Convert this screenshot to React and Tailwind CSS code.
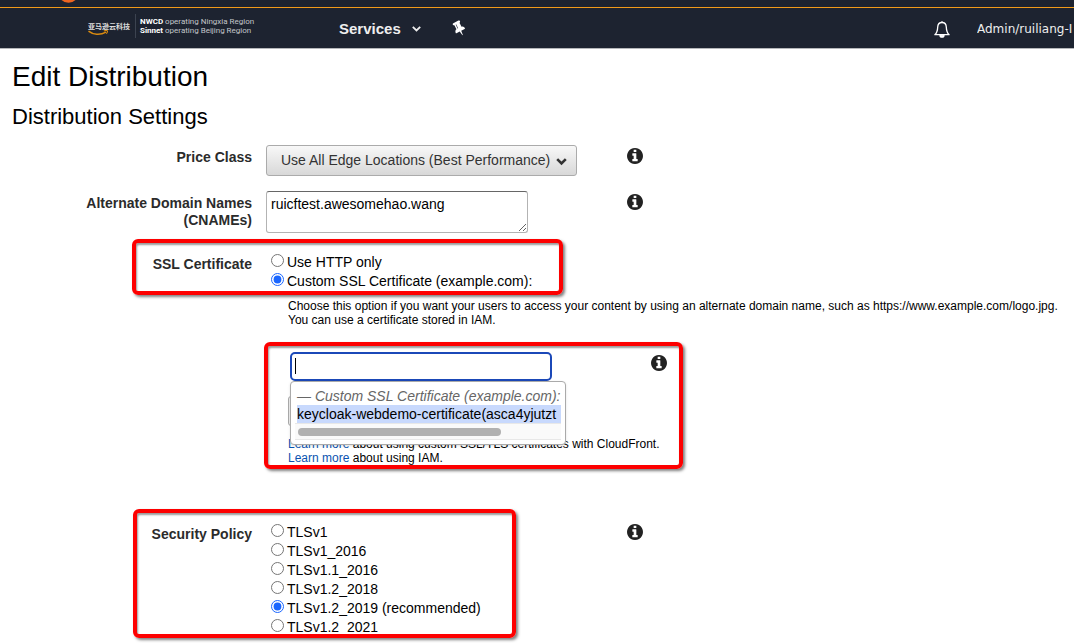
function InfoButton({ label, className = "" }) {
  return (
    <button type="button" aria-label={`Help: ${label}`} className={`block cursor-pointer text-[#222] ${className}`}>
      <svg width="16" height="16" viewBox="128 128 1536 1536" fill="currentColor" aria-hidden="true">
        <path d="M1152 1376v-160q0-14-9-23t-23-9h-96v-512q0-14-9-23t-23-9h-320q-14 0-23 9t-9 23v160q0 14 9 23t23 9h96v320h-96q-14 0-23 9t-9 23v160q0 14 9 23t23 9h448q14 0 23-9t9-23zm-128-896v-160q0-14-9-23t-23-9h-192q-14 0-23 9t-9 23v160q0 14 9 23t23 9h192q14 0 23-9t9-23zm640 416q0 209-103 385.500t-279.500 279.500-385.500 103-385.500-103-279.500-279.500-103-385.500 103-385.500 279.500-279.500 385.500-103 385.500 103 279.500 279.500 103 385.500z" />
      </svg>
    </button>
  );
}

function Highlight({ className }) {
  return (
    <div
      aria-hidden="true"
      className={`pointer-events-none absolute z-30 rounded-md border-4 border-[#fd0000] shadow-[2px_2px_3px_rgba(0,0,0,0.5),inset_1px_2px_2px_rgba(0,0,0,0.4)] ${className}`}
    />
  );
}

function RadioOption({ name, label, defaultChecked }) {
  return (
    <label className="flex h-[19px] w-fit items-center gap-[3px] pl-[5px]">
      <input type="radio" name={name} defaultChecked={defaultChecked} className="-mt-1 size-[13px] accent-[#1a66ff]" />
      <span className="whitespace-nowrap leading-[19px]">{label}</span>
    </label>
  );
}

function Header() {
  return (
    <header className="overflow-hidden border-b border-[#b5b7ba] bg-[#1d2330] text-[#eee]">
      <div className="h-2 overflow-hidden border-b border-[#f19a1a] pl-[59px]">
        <svg width="19" height="3" viewBox="0 0 19 3" aria-hidden="true">
          <circle cx="9.5" cy="-7.5" r="10.3" fill="#ee6420" />
        </svg>
      </div>
      <div className="flex h-10 items-center">
        <a href="#home" className="ml-[88px] flex w-[251px] shrink-0 items-center">
          <span className="flex w-[47px] flex-col pt-0.5">
            <span className="whitespace-nowrap font-['Noto_Sans_CJK_SC',sans-serif] text-[7px] font-bold leading-[8px] text-[#ddd]">
              亚马逊云科技
            </span>
            <svg width="21" height="6" viewBox="0 0 21 6" aria-hidden="true" fill="none" stroke="#d88a10">
              <path d="M.5 1.2C5 4.8 12 5.6 18 2.2" strokeWidth="1.5" />
              <path d="M15.8 1C17 .5 18.8.4 19.3.8 19.7 1.2 19.1 2.8 18.4 3.8" strokeWidth="1.1" />
            </svg>
          </span>
          <span className="-mt-1 border-l border-[#3c4350] py-[3px] pl-1 font-[Roboto,'Noto_Sans',sans-serif] text-[8px] leading-[9px] text-[#c2c5ca]">
            <span className="block whitespace-nowrap">
              <b className="text-white">NWCD</b> operating Ningxia Region
            </span>
            <span className="block whitespace-nowrap">
              <b className="text-white">Sinnet</b> operating Beijing Region
            </span>
          </span>
        </a>
        <button type="button" className="flex shrink-0 items-center gap-[11px] pt-0.5 text-[15px] font-bold">
          Services
          <svg width="9" height="6" viewBox="0 0 9 6" aria-hidden="true" fill="none" stroke="#eee" strokeWidth="1.8">
            <path d="M.8.8 4.5 4.4 8.2.8" />
          </svg>
        </button>
        <button type="button" aria-label="Pin shortcut" className="ml-[30px] shrink-0 text-white">
          <svg width="16" height="16" viewBox="0 0 1792 1792" fill="currentColor" aria-hidden="true">
            <g transform="rotate(-27 896 896)">
              <path d="M800 864v-448q0-14-9-23t-23-9-23 9-9 23v448q0 14 9 23t23 9 23-9 9-23zm672 352q0 26-19 45t-45 19h-429l-51 483q-2 12-10.500 20.500t-20.500 8.500h-1q-27 0-32-27l-76-485h-404q-26 0-45-19t-19-45q0-123 78.500-221.500t177.500-98.500v-512q-52 0-90-38t-38-90 38-90 90-38h640q52 0 90 38t38 90-38 90-90 38v512q99 0 177.500 98.500t78.500 221.500z" />
            </g>
          </svg>
        </button>
        <div className="ml-auto flex items-center gap-[27px]">
          <button type="button" aria-label="Notifications" className="pt-0.5">
            <svg width="16" height="17" viewBox="0 0 16 17" fill="none" stroke="#fff" strokeWidth="1.3" strokeLinejoin="round" aria-hidden="true">
              <path d="M8 1.500C5.200 1.500 3.800 3.300 3.700 6 3.600 9.800 3 11.800.9 13.700h14.200C13 11.800 12.400 9.800 12.300 6 12.200 3.300 10.800 1.500 8 1.500Z" />
              <path d="M8 1.500V.2" />
              <path d="M6 14.200h4c0 1.200-.9 2-2 2s-2-.8-2-2Z" fill="#fff" />
            </svg>
          </button>
          <button type="button" className="w-[97px] overflow-hidden whitespace-nowrap pt-0.5 text-left font-['DejaVu_Sans',sans-serif] text-xs">
            Admin/ruiliang-I
          </button>
        </div>
      </div>
    </header>
  );
}

function Row({ label, htmlFor, className = "", children }) {
  const text = "w-[252px] shrink-0 pt-1 text-right font-bold leading-[17px] text-[#2b2b2b]";
  return (
    <div className={`relative flex items-start ${className}`}>
      {htmlFor ? (
        <label htmlFor={htmlFor} className={text}>{label}</label>
      ) : (
        <div className={text}>{label}</div>
      )}
      <div className="ml-3.5 flex items-start">{children}</div>
    </div>
  );
}

const policies = ["TLSv1", "TLSv1_2016", "TLSv1.1_2016", "TLSv1.2_2018", "TLSv1.2_2019 (recommended)", "TLSv1.2_2021"];

export default function App() {
  return (
    <div className="min-h-screen overflow-x-hidden bg-white font-['Liberation_Sans',Arial,sans-serif] text-sm text-black">
      <Header />
      <main>
        <h1 className="px-3 pt-3 text-[28px] leading-8">Edit Distribution</h1>
        <h2 className="px-3 pt-3 text-[22px] leading-6">Distribution Settings</h2>
        <form>
          <Row label="Price Class" htmlFor="price" className="mt-4">
            <div className="w-[361px]">
              <div className="relative w-[311px]">
                <select
                  id="price"
                  className="h-[31px] w-full appearance-none rounded-[3px] border border-[#ababab] bg-linear-to-b from-[#f8f8f8] to-[#d8d8d8] pb-0.5 pl-3.5 text-[#333]"
                >
                  <option>Use All Edge Locations (Best Performance)</option>
                </select>
                <svg className="pointer-events-none absolute right-2.5 top-[13px]" width="11" height="8" viewBox="0 0 11 8" aria-hidden="true" fill="none" stroke="#333" strokeWidth="2.6">
                  <path d="M1.200 1.200 5.500 5.500 9.800 1.200" />
                </svg>
              </div>
            </div>
            <InfoButton label="Price Class" className="mt-[3px]" />
          </Row>

          <Row
            label={<>Alternate Domain Names<br />(CNAMEs)</>}
            htmlFor="cnames"
            className="mt-[15px]"
          >
            <div className="w-[361px]">
              <textarea
                id="cnames"
                defaultValue="ruicftest.awesomehao.wang"
                className="block h-[42px] w-[262px] rounded-[3px] border border-[#b3b3b3] border-t-[#666] px-1 pt-1 leading-[17px]"
              />
            </div>
            <InfoButton label="Alternate Domain Names" className="mt-[3px]" />
          </Row>

          <Row label="SSL Certificate" className="mt-[19px]">
            <Highlight className="-top-[13px] left-[132px] h-14 w-[431px]" />
            <div className="pt-px">
              <RadioOption name="ssl" label="Use HTTP only" />
              <RadioOption name="ssl" label="Custom SSL Certificate (example.com):" defaultChecked />
              <div className="mt-2 pl-[22px] text-xs leading-[14px]">
                <p className="whitespace-nowrap">
                  Choose this option if you want your users to access your content by using an alternate domain name, such as https://www.example.com/logo.jpg.
                </p>
                <p>You can use a certificate stored in IAM.</p>
                <div className="relative mt-[25px]">
                  <Highlight className="-left-6 -top-[10px] h-[127px] w-[419px]" />
                  <div className="flex items-start">
                    <div className="relative w-[363px] pl-0.5">
                      <input
                        type="text"
                        aria-label="Search certificates"
                        className="block h-[29px] w-[262px] rounded-[5px] border-2 border-[#1b48b8] bg-white px-[3px] text-sm outline-none"
                      />
                      <span aria-hidden="true" className="absolute left-[7px] top-1.5 h-4 w-px bg-black" />
                      <div className="absolute left-0.5 top-[29px] z-20 w-[276px] rounded-[4px] border border-[#aaa] bg-white px-1 pb-1 pt-[5px] text-sm shadow-sm">
                        <div className="whitespace-nowrap pl-0.5 italic leading-[18px] text-[#666]">
                          — Custom SSL Certificate (example.com):
                        </div>
                        <div role="option" aria-selected="true" className="ml-0.5 overflow-hidden whitespace-nowrap bg-[#c8d9fd] leading-[18px]">
                          keycloak-webdemo-certificate(asca4yjutzt
                        </div>
                        <div className="border-y border-[#e8e8e8] bg-[#fafafa] px-[3px] pb-[3px] pt-1">
                          <div className="h-2 w-[203px] rounded-full bg-[#b1b1b1]" />
                        </div>
                      </div>
                    </div>
                    <InfoButton label="Custom SSL Certificate" className="mt-[3px]" />
                  </div>
                  <button type="button" aria-label="Request certificate" className="mt-[15px] block h-[30px] w-[240px] rounded-[3px] border border-[#ababab] bg-[#eee]" />
                  <p className="mt-[11px]">
                    <a href="#ssl" className="text-[#0a52b0]">Learn more</a> about using custom SSL/TLS certificates with CloudFront.
                  </p>
                  <p>
                    <a href="#iam" className="text-[#0a52b0]">Learn more</a> about using IAM.
                  </p>
                </div>
              </div>
            </div>
          </Row>

          <Row label="Security Policy" className="mt-[57px]">
            <Highlight className="-top-[13px] left-[133px] h-[129px] w-[383px]" />
            <div className="w-[361px] pt-px">
              {policies.map((p, i) => (
                <RadioOption key={p} name="policy" label={p} defaultChecked={i === 4} />
              ))}
            </div>
            <InfoButton label="Security Policy" className="mt-0.5" />
          </Row>
        </form>
      </main>
    </div>
  );
}
